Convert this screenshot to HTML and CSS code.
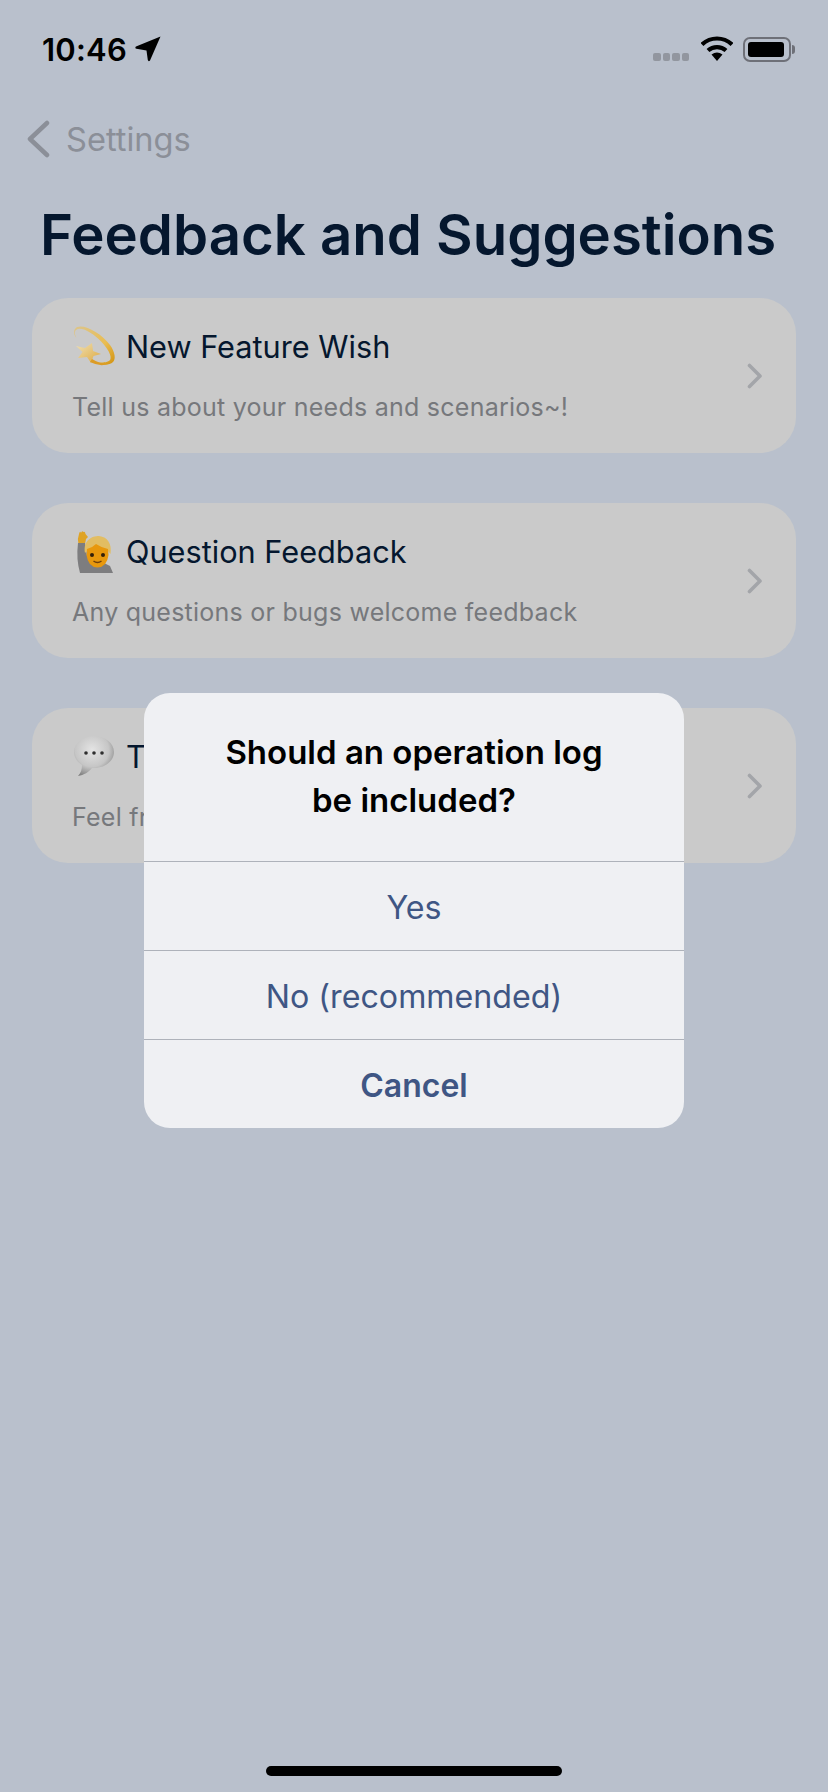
FILE: index.html
```html
<!DOCTYPE html>
<html lang="en">
<head>
    <meta charset="UTF-8">
    <meta name="viewport" content="width=device-width, initial-scale=1.0">
    <title>Feedback and Suggestions</title>
    <link rel="stylesheet" href="styles.css">
</head>
<body>
    <div class="screen">

        <!-- Status bar -->
        <div class="status-bar">
            <div class="status-left">
                <span class="time">10:46</span>
                <svg class="arrow" width="26" height="26" viewBox="0 0 26 26">
                    <path d="M25.500 0.500 L15 24.500 Q13.500 26 12.800 24 L11.500 14.500 L1.500 12.800 Q-0.500 12 1 10.500 Z" fill="#000"/>
                </svg>
            </div>
            <div class="status-right">
                <div class="signal"><i></i><i></i><i></i><i></i></div>
                <svg class="wifi" width="32" height="26" viewBox="0 0 32 26">
                    <path d="M1 8.500 C9.500 0.500 22.500 0.500 31 8.500" fill="none" stroke="#000" stroke-width="4.200"/>
                    <path d="M7 14.500 C12 10 20 10 25 14.500" fill="none" stroke="#000" stroke-width="4.200"/>
                    <path d="M10.500 18.500 Q16 14.500 21.500 18.500 L16 25 Z" fill="#000"/>
                </svg>
                <div class="battery"><div class="battery-body"><div class="battery-fill"></div></div><div class="battery-cap"></div></div>
            </div>
        </div>

        <!-- Nav -->
        <div class="nav">
            <svg class="back" width="26" height="38" viewBox="0 0 26 38">
                <path d="M22 3 L5 19 L22 35" fill="none" stroke="#8b8f98" stroke-width="4.500" stroke-linecap="round" stroke-linejoin="round"/>
            </svg>
            <span class="back-label">Settings</span>
        </div>

        <h1>Feedback and Suggestions</h1>

        <!-- Cards -->
        <div class="cards">
            <div class="card">
                <div class="card-text">
                    <div class="card-title">
                        <svg class="emoji" width="44" height="44" viewBox="0 0 44 44">
                            <defs>
                                <linearGradient id="ring" x1="0" y1="0" x2="1" y2="1">
                                    <stop offset="0" stop-color="#dcc58c"/>
                                    <stop offset="0.6" stop-color="#e9bd52"/>
                                    <stop offset="1" stop-color="#d2920f"/>
                                </linearGradient>
                                <linearGradient id="star" x1="0" y1="0" x2="1" y2="1">
                                    <stop offset="0" stop-color="#efe0b4"/>
                                    <stop offset="1" stop-color="#dea93f"/>
                                </linearGradient>
                            </defs>
                            <path d="M5 3 C13 0 29 9 38 21 C43 28 44 35 41 38 C37 42 28 41 22 38 C29 39 37 39 38.500 35 C40 30 32 19 23 12 C15 6 8 3 4 6 C2 8 3 11 4.500 14 C1.500 11 1 5 5 3 Z" fill="url(#ring)"/>
                            <path d="M20 19 L21 27 L29 30 L21.500 32 L19 39 L15 33 L6 34 L10.500 28 L4 22 L13 24 Z" fill="url(#star)"/>
                            <path d="M20 35 Q28 40 36 40 Q28 43 18 38 Z" fill="#dc9c26"/>
                        </svg>
                        <span>New Feature Wish</span>
                    </div>
                    <div class="card-sub">Tell us about your needs and scenarios~!</div>
                </div>
                <svg class="chevron" width="16" height="26" viewBox="0 0 16 26">
                    <path d="M2.500 2.500 L13 13 L2.500 23.500" fill="none" stroke="#a3a5a9" stroke-width="3.600" stroke-linecap="round" stroke-linejoin="round"/>
                </svg>
            </div>

            <div class="card">
                <div class="card-text">
                    <div class="card-title">
                        <svg class="emoji" width="44" height="44" viewBox="0 0 44 44">
                            <path d="M7 5 Q8 1 9 4 Q10 1 11.500 3 Q13 2 13.500 5 L16 8 L14 10 L13 15 L6.500 15 Q5 10 7 5 Z" fill="#dfa325"/>
                            <path d="M6 14 L13 14 L15 27 L30 33 L38 37 L41 44 L8 44 Q4 30 6 14 Z" fill="#7d7d7f"/>
                            <path d="M13 24 C11 11 20 7 27 7 C36 8 40 15 38.500 25 L36 22 L15 22 Z" fill="#e2bd62"/>
                            <path d="M15 20 Q20 19 24 15 Q30 19 36 20 L36.500 26 Q35 38 25.500 38.500 Q16 38 14.500 26 Z" fill="#e8980d"/>
                            <circle cx="20" cy="26" r="2" fill="#33200a"/>
                            <circle cx="31" cy="26" r="2" fill="#33200a"/>
                            <path d="M21.500 32 Q25.500 35 29.500 32" fill="none" stroke="#6f3f0b" stroke-width="1.500"/>
                        </svg>
                        <span>Question Feedback</span>
                    </div>
                    <div class="card-sub">Any questions or bugs welcome feedback</div>
                </div>
                <svg class="chevron" width="16" height="26" viewBox="0 0 16 26">
                    <path d="M2.500 2.500 L13 13 L2.500 23.500" fill="none" stroke="#a3a5a9" stroke-width="3.600" stroke-linecap="round" stroke-linejoin="round"/>
                </svg>
            </div>

            <div class="card">
                <div class="card-text">
                    <div class="card-title">
                        <svg class="emoji" width="44" height="44" viewBox="0 0 44 44">
                            <defs>
                                <radialGradient id="bubble" cx="0.45" cy="0.35" r="0.7">
                                    <stop offset="0" stop-color="#e4e4e4"/>
                                    <stop offset="0.6" stop-color="#c6c6c6"/>
                                    <stop offset="1" stop-color="#7d7d7d"/>
                                </radialGradient>
                            </defs>
                            <path d="M22 2 C33 2 42 9 42 18 C42 27 33 34 22 34 L20 34 C17 38 12 41 6 42 C9 39 10 35 10 31 C5 28 2 23 2 18 C2 9 11 2 22 2 Z" fill="url(#bubble)"/>
                            <circle cx="14" cy="19" r="1.800" fill="#2e2e2e"/>
                            <circle cx="22" cy="19" r="1.800" fill="#2e2e2e"/>
                            <circle cx="30" cy="19" r="1.800" fill="#2e2e2e"/>
                        </svg>
                        <span>Tell Us</span>
                    </div>
                    <div class="card-sub">Feel free to share</div>
                </div>
                <svg class="chevron" width="16" height="26" viewBox="0 0 16 26">
                    <path d="M2.500 2.500 L13 13 L2.500 23.500" fill="none" stroke="#a3a5a9" stroke-width="3.600" stroke-linecap="round" stroke-linejoin="round"/>
                </svg>
            </div>
        </div>

        <div class="home-indicator"></div>

        <!-- Alert -->
        <div class="dialog">
            <div class="dialog-title">Should an operation log<br>be included?</div>
            <div class="dialog-btn">Yes</div>
            <div class="dialog-btn">No (recommended)</div>
            <div class="dialog-btn cancel">Cancel</div>
        </div>
    </div>
</body>
</html>
```

FILE: styles.css
```css
* {
    box-sizing: border-box;
}

body {
    margin: 0;
    font-family: Inter, "Noto Sans", sans-serif;
    background-color: #b9c0cc;
}

.screen {
    position: relative;
    width: 828px;
    height: 1792px;
    display: flex;
    flex-direction: column;
    overflow: hidden;
}

.status-bar {
    height: 98px;
    padding: 28px 33px 0 42px;
    display: flex;
    justify-content: space-between;
    align-items: flex-start;
}

.status-left {
    display: flex;
    align-items: center;
    gap: 8px;
    height: 42px;
}

.time {
    font-size: 31px;
    font-weight: 600;
    color: #000;
    letter-spacing: 0.2px;
}

.status-right {
    display: flex;
    align-items: center;
    height: 42px;
}

.signal {
    display: flex;
    gap: 2px;
    margin: 16px 12px 0 0;
}

.signal i {
    width: 7.500px;
    height: 8px;
    border-radius: 2px;
    background-color: #92969f;
}

.wifi {
    margin-right: 10px;
}

.battery {
    display: flex;
    align-items: center;
}

.battery-body {
    width: 48px;
    height: 25px;
    padding: 3px;
    border: 2px solid #6e7078;
    border-radius: 7px;
}

.battery-fill {
    width: 36px;
    height: 100%;
    background-color: #000;
    border-radius: 3px;
}

.battery-cap {
    width: 3px;
    height: 9px;
    margin-left: 1px;
    background-color: #6e7078;
    border-radius: 0 3px 3px 0;
}

.nav {
    height: 44px;
    margin-top: 19px;
    padding-left: 25px;
    display: flex;
    align-items: center;
    gap: 15px;
}

.back-label {
    font-size: 32.600px;
    color: #8b8f98;
}

h1 {
    margin: 39px 0 0 40px;
    font-size: 56.300px;
    line-height: 70px;
    font-weight: 600;
    color: #05172e;
    white-space: nowrap;
}

.cards {
    margin: 28px 32px 0;
    display: flex;
    flex-direction: column;
    gap: 50px;
}

.card {
    height: 155px;
    padding: 0 33px 0 40px;
    display: flex;
    align-items: center;
    justify-content: space-between;
    background-color: #cacaca;
    border-radius: 36px;
}

.card-text {
    margin-top: -5px;
}

.card-title {
    display: flex;
    align-items: center;
    gap: 10px;
    height: 44px;
    font-size: 30.700px;
    color: #05172e;
}

.card-sub {
    margin-top: 24px;
    font-size: 25px;
    letter-spacing: 0.25px;
    color: #76787c;
    white-space: nowrap;
}

.home-indicator {
    width: 296px;
    height: 10px;
    margin: auto auto 16px;
    background-color: #000;
    border-radius: 5px;
}

.dialog {
    position: absolute;
    top: 693px;
    left: 144px;
    width: 540px;
    background-color: #eff0f3;
    border-radius: 26px;
    overflow: hidden;
}

.dialog-title {
    height: 168px;
    padding-top: 35px;
    text-align: center;
    font-size: 33px;
    line-height: 48px;
    font-weight: 600;
    color: #000;
}

.dialog-btn {
    height: 89px;
    padding-top: 2px;
    display: flex;
    align-items: center;
    justify-content: center;
    border-top: 1px solid #aeb2ba;
    font-size: 32.200px;
    color: #3f5684;
}

.dialog-btn.cancel {
    font-size: 32px;
    font-weight: 600;
}
```
